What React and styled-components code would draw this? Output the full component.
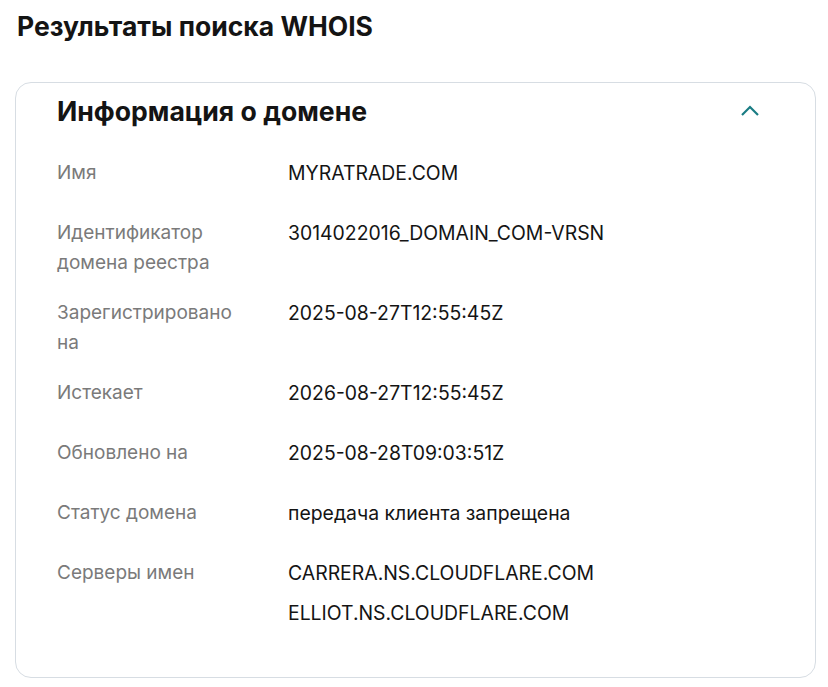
import React from "react";
import styled, { createGlobalStyle } from "styled-components";

const GlobalStyle = createGlobalStyle`
  body {
    margin: 0;
    background: #ffffff;
    font-family: Inter, "Noto Sans", sans-serif;
    color: #111111;
  }
`;

const Page = styled.div`
  padding: 10px 10px 10px 15px;
`;

const Title = styled.h1`
  margin: 0 0 0 2px;
  font-size: 26.5px;
  line-height: 32px;
  font-weight: 700;
  color: #141414;
`;

const Card = styled.section`
  margin-top: 40px;
  width: 801px;
  box-sizing: border-box;
  border: 1px solid #d7dde3;
  border-radius: 16px;
  padding: 0 40px 29px 41px;
`;

const Header = styled.div`
  display: flex;
  align-items: center;
  justify-content: space-between;
  height: 56px;
  padding-right: 15px;
`;

const HeaderTitle = styled.h2`
  margin: 0;
  font-size: 26.6px;
  font-weight: 700;
  color: #141414;
`;

const Toggle = styled.button`
  border: 0;
  background: none;
  padding: 0;
  display: flex;
  color: #1a7d84;
  cursor: pointer;
`;

const Rows = styled.div`
  padding-top: 9px;
`;

const Row = styled.div`
  display: grid;
  grid-template-columns: 231px 1fr;
  padding: 10px 0;
  line-height: 30px;
`;

const Label = styled.div`
  color: #7a7a7a;
  font-size: 19px;
  width: 180px;
`;

const Value = styled.div`
  color: #141414;
  font-size: 19.4px;
  margin-bottom: 10px;
`;

const rows = [
  { label: "Имя", values: ["MYRATRADE.COM"] },
  { label: "Идентификатор домена реестра", values: ["3014022016_DOMAIN_COM-VRSN"] },
  { label: "Зарегистрировано на", values: ["2025-08-27T12:55:45Z"] },
  { label: "Истекает", values: ["2026-08-27T12:55:45Z"] },
  { label: "Обновлено на", values: ["2025-08-28T09:03:51Z"] },
  { label: "Статус домена", values: ["передача клиента запрещена"] },
  {
    label: "Серверы имен",
    values: ["CARRERA.NS.CLOUDFLARE.COM", "ELLIOT.NS.CLOUDFLARE.COM"]
  }
];

export default function App() {
  return (
    <Page>
      <GlobalStyle />
      <Title>Результаты поиска WHOIS</Title>
      <Card>
        <Header>
          <HeaderTitle>Информация о домене</HeaderTitle>
          <Toggle aria-label="Свернуть">
            <svg width="20" height="12" viewBox="0 0 20 12" fill="none">
              <path d="M2 10 L10 2 L18 10" stroke="currentColor" strokeWidth="2.2" />
            </svg>
          </Toggle>
        </Header>
        <Rows>
          {rows.map(r => (
            <Row key={r.label}>
              <Label>{r.label}</Label>
              <div>
                {r.values.map(v => (
                  <Value key={v}>{v}</Value>
                ))}
              </div>
            </Row>
          ))}
        </Rows>
      </Card>
    </Page>
  );
}
